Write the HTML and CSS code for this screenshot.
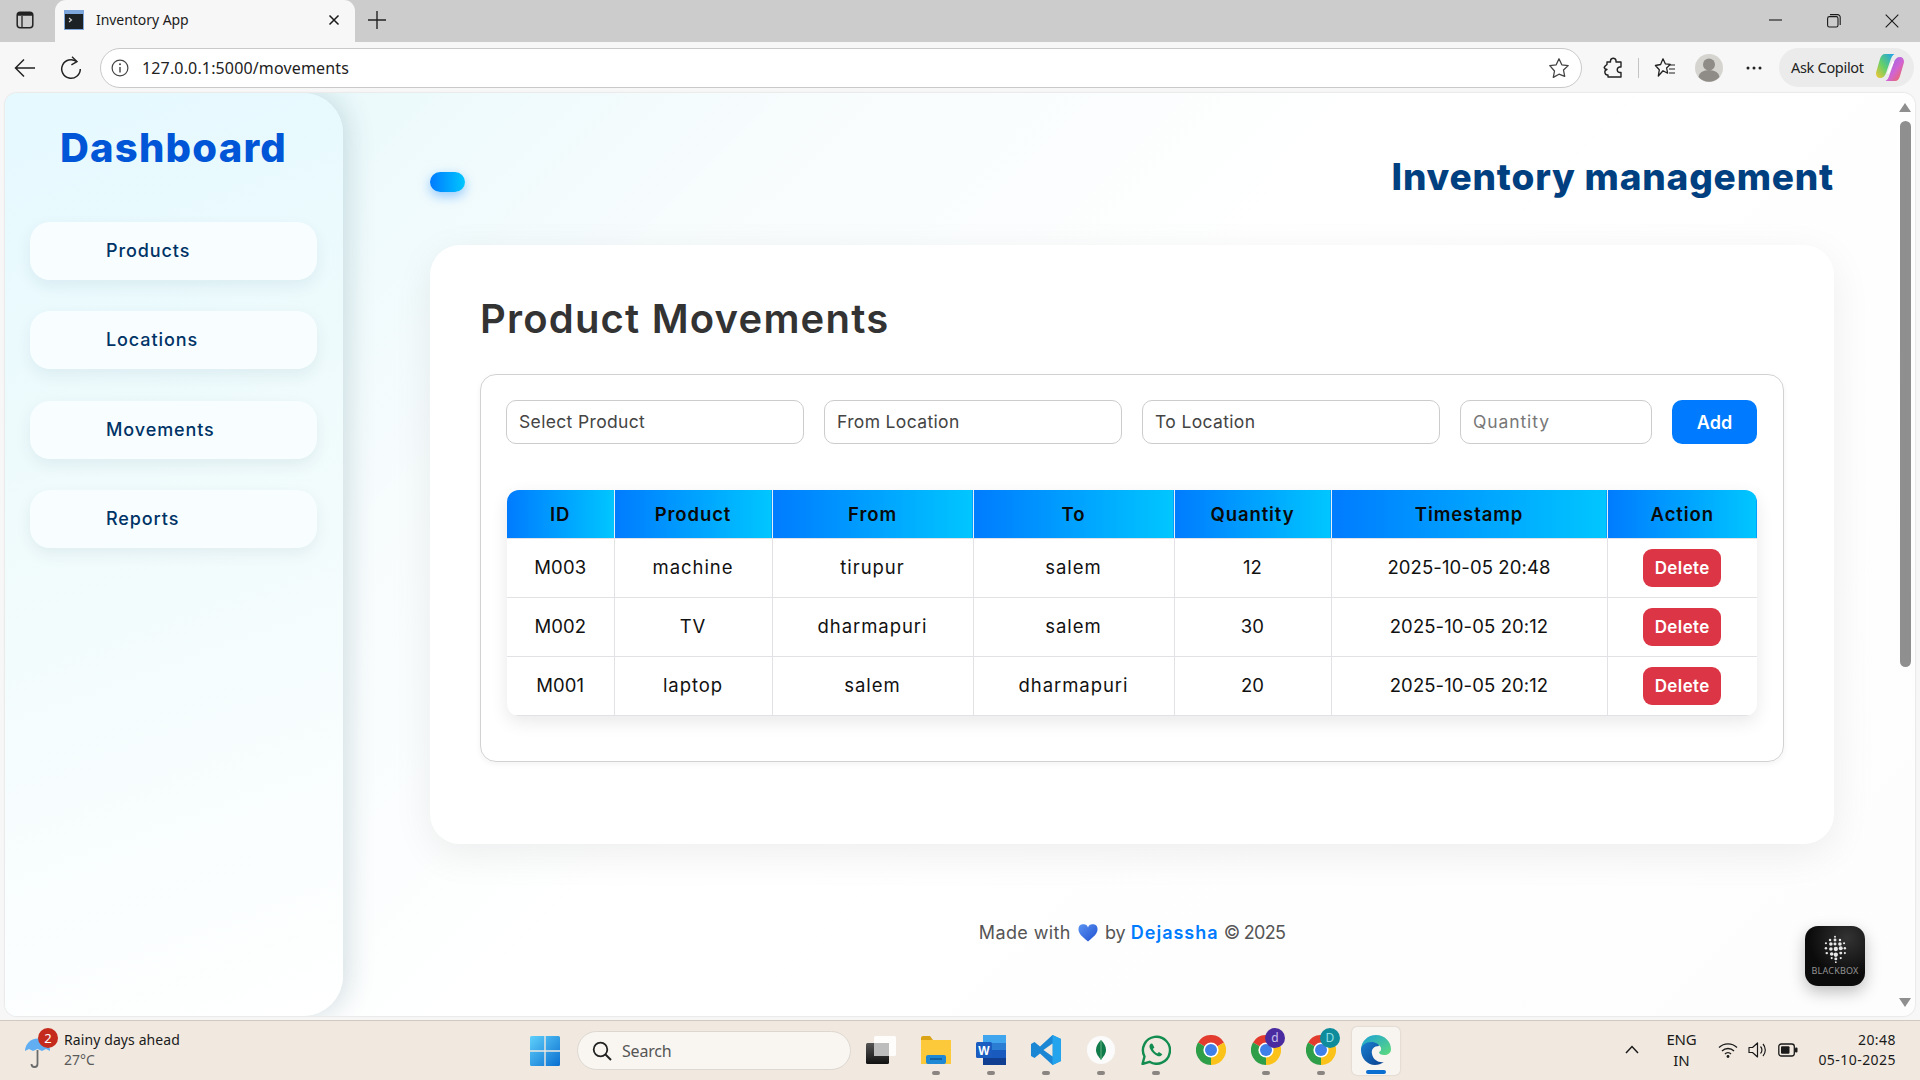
FILE: index.html
```html
<!DOCTYPE html>
<html lang="en">
<head>
<meta charset="utf-8">
<title>Inventory App</title>
<link rel="stylesheet" href="styles.css">
</head>
<body>
<svg class="defs" width="0" height="0" aria-hidden="true">
  <defs>
    <g id="chrome">
      <path d="M15 15 L2 7.5 A15 15 0 0 1 28 7.5 Z" fill="#e33b2e"/>
      <path d="M15 15 L28 7.5 A15 15 0 0 1 15 30 Z" fill="#fbc21a"/>
      <path d="M15 15 L15 30 A15 15 0 0 1 2 7.5 Z" fill="#2f9e48"/>
      <circle cx="15" cy="15" r="7.6" fill="#fff"/>
      <circle cx="15" cy="15" r="6" fill="#3f7fe8"/>
    </g>
  </defs>
</svg>

<header class="tabstrip">
  <svg class="sidebar-ic" width="18" height="18" viewBox="0 0 18 18"><rect x="1.2" y="1.2" width="15.6" height="15.6" rx="3" fill="none" stroke="#222" stroke-width="1.5"/><path d="M1.5 4.8V3.5A2.4 2.4 0 0 1 3.9 1.2h10.2a2.4 2.4 0 0 1 2.4 2.3v1.3z" fill="#222"/><path d="M6 5v11" stroke="#222" stroke-width="1.3"/></svg>
  <div class="tab">
    <svg width="20" height="20" viewBox="0 0 20 20"><rect width="20" height="20" fill="#7da6dc"/><rect x="1" y="4" width="18" height="15" fill="#1c2126"/><path d="M5 8l2.5 2L5 12" stroke="#ddd" fill="none" stroke-width="1.1"/></svg>
    <span class="tab-title">Inventory App</span>
    <svg width="12" height="12" viewBox="0 0 12 12"><path d="M1.5 1.5l9 9M10.5 1.5l-9 9" stroke="#1a1a1a" stroke-width="1.5"/></svg>
  </div>
  <svg class="plus" width="18" height="18" viewBox="0 0 18 18"><path d="M9 0v18M0 9h18" stroke="#222" stroke-width="1.4"/></svg>
  <div class="winctl">
    <svg width="14" height="14" viewBox="0 0 14 14"><path d="M0 6h13" stroke="#1a1a1a" stroke-width="1.1"/></svg>
    <svg width="14" height="14" viewBox="0 0 14 14"><rect x=".6" y="2.6" width="10.4" height="10.4" rx="1.8" fill="none" stroke="#1a1a1a" stroke-width="1.1"/><path d="M3 .6h7.5A2.6 2.6 0 0 1 13.2 3.2V11" fill="none" stroke="#1a1a1a" stroke-width="1.1"/></svg>
    <svg width="14" height="14" viewBox="0 0 14 14"><path d="M.7.7l12.6 12.6M13.300.7L.7 13.300" stroke="#1a1a1a" stroke-width="1.1"/></svg>
  </div>
</header>

<nav class="toolbar">
  <svg class="back" width="22" height="20" viewBox="0 0 22 20"><path d="M21 10H2M10 1.5L1.5 10l8.5 8.5" fill="none" stroke="#222" stroke-width="1.5"/></svg>
  <svg class="reload" width="22" height="24" viewBox="0 0 22 24"><path d="M16.5 5.5A9.3 9.3 0 1 0 20.3 13" fill="none" stroke="#222" stroke-width="1.5"/><path d="M12 .8l5 4.7-5.6 3.3" fill="none" stroke="#222" stroke-width="1.4"/></svg>
  <div class="address">
    <svg width="18" height="18" viewBox="0 0 18 18"><circle cx="9" cy="9" r="7.9" fill="none" stroke="#444" stroke-width="1.2"/><path d="M9 8v5.5" stroke="#444" stroke-width="1.4"/><circle cx="9" cy="5.3" r="1" fill="#444"/></svg>
    <span class="url">127.0.0.1:5000/movements</span>
    <svg width="22" height="22" viewBox="0 0 22 22"><path d="M11 1.800l2.800 6 6.400.8-4.700 4.400 1.200 6.400L11 17.200l-5.700 3.200 1.200-6.400L1.800 8.600l6.400-.8z" fill="none" stroke="#444" stroke-width="1.3" stroke-linejoin="round"/></svg>
  </div>
  <svg class="t-ext" width="20" height="22" viewBox="0 0 20 22"><path d="M7.500 3.500a2.800 2.800 0 0 1 5.500 0V5H18v5h-1.500a2.800 2.800 0 0 0 0 5.500H18V20H5v-2a2.800 2.800 0 0 1-1-5.500l-1.800-.5-1-1.500 1-1.500L4 7.500V5h3.500z" fill="none" stroke="#222" stroke-width="1.4" stroke-linejoin="round"/></svg>
  <span class="t-div"></span>
  <svg class="t-fav" width="22" height="22" viewBox="0 0 22 22"><path d="M9 1.800l2.300 5 5 .6L12.600 11l1 5.200L9 13.700 4.300 19l1-6.200L1.400 8.500l5.200-1z" fill="none" stroke="#222" stroke-width="1.3" stroke-linejoin="round"/><path d="M14.500 8h6.500M15 12h6M15 16h6" stroke="#222" stroke-width="1.2"/></svg>
  <svg class="t-avatar" width="28" height="28" viewBox="0 0 28 28"><circle cx="14" cy="14" r="14" fill="#d6d4cf"/><circle cx="14" cy="10.500" r="6" fill="#8f8c87"/><path d="M3.500 23a10.500 7 0 0 1 21 0 14 14 0 0 1-21 0z" fill="#8f8c87"/></svg>
  <svg class="t-dots" width="16" height="4" viewBox="0 0 16 4"><circle cx="2" cy="2" r="1.5" fill="#222"/><circle cx="8" cy="2" r="1.5" fill="#222"/><circle cx="14" cy="2" r="1.5" fill="#222"/></svg>
  <div class="copilot">
    <span>Ask Copilot</span>
    <svg width="28" height="27" viewBox="0 0 28 27">
      <defs>
        <linearGradient id="cpa" x1="0" y1="1" x2="1" y2="0"><stop offset="0" stop-color="#f7c62f"/><stop offset=".45" stop-color="#63cf6a"/><stop offset="1" stop-color="#1b9ff0"/></linearGradient>
        <linearGradient id="cpb" x1="0" y1="0" x2="1" y2="1"><stop offset="0" stop-color="#7f6cf0"/><stop offset=".55" stop-color="#d264d2"/><stop offset="1" stop-color="#f5693f"/></linearGradient>
      </defs>
      <path d="M9 0h9.500c-2 1-3 3-4 6L10 19c-1 3-3 5-6 5-3 0-4.500-3-3.800-6L4 5c.8-3 2.500-5 5-5z" fill="url(#cpa)"/>
      <path d="M19 27H9.500c2-1 3-3 4-6L18 8c1-3 3-5 6-5 3 0 4.500 3 3.800 6L24 22c-.8 3-2.500 5-5 5z" fill="url(#cpb)"/>
      <path d="M16.500 7.500l-5.500 12h1.800l5.400-12z" fill="#fff"/>
    </svg>
  </div>
</nav>

<div class="viewport">
  <div class="page">
    <aside class="sidebar">
      <h2 class="brand">Dashboard</h2>
      <ul class="menu">
        <li><a class="menu-item">Products</a></li>
        <li><a class="menu-item">Locations</a></li>
        <li><a class="menu-item">Movements</a></li>
        <li><a class="menu-item">Reports</a></li>
      </ul>
    </aside>

    <main class="main">
      <div class="topbar">
        <span class="toggle"></span>
        <h1 class="app-title">Inventory management</h1>
      </div>

      <section class="card">
        <h2 class="card-title">Product Movements</h2>
        <div class="panel">
          <form class="entry">
            <div class="field grow">Select Product</div>
            <div class="field grow">From Location</div>
            <div class="field grow">To Location</div>
            <div class="field qty">Quantity</div>
            <button class="add" type="button">Add</button>
          </form>
          <div class="table-wrap">
            <table class="grid">
              <colgroup>
                <col class="c-id"><col class="c-prod"><col class="c-from"><col class="c-to"><col class="c-qty"><col class="c-time"><col class="c-act">
              </colgroup>
              <thead>
                <tr><th>ID</th><th>Product</th><th>From</th><th>To</th><th>Quantity</th><th>Timestamp</th><th>Action</th></tr>
              </thead>
              <tbody>
                <tr><td class="n">M003</td><td>machine</td><td>tirupur</td><td>salem</td><td class="n">12</td><td class="n">2025-10-05 20:48</td><td class="act"><button class="del" type="button">Delete</button></td></tr>
                <tr><td class="n">M002</td><td>TV</td><td>dharmapuri</td><td>salem</td><td class="n">30</td><td class="n">2025-10-05 20:12</td><td class="act"><button class="del" type="button">Delete</button></td></tr>
                <tr><td class="n">M001</td><td>laptop</td><td>salem</td><td>dharmapuri</td><td class="n">20</td><td class="n">2025-10-05 20:12</td><td class="act"><button class="del" type="button">Delete</button></td></tr>
              </tbody>
            </table>
          </div>
        </div>
      </section>

      <footer class="foot">
        <span class="made">Made with</span>
        <svg width="20" height="18" viewBox="0 0 20 18"><defs><linearGradient id="hg" x1="0" y1="0" x2="1" y2="1"><stop offset="0" stop-color="#5b93f2"/><stop offset="1" stop-color="#1f50d0"/></linearGradient></defs><path d="M10 17.500C4 12.500.5 9.500.5 5.500A4.900 4.900 0 0 1 10 3.500a4.900 4.900 0 0 1 9.500 2c0 4-3.500 7-9.500 12z" fill="url(#hg)"/></svg>
        <span>by <b class="author">Dejassha</b> <span class="copy">© 2025</span></span>
      </footer>

      <div class="blackbox">
        <svg width="28" height="28" viewBox="0 0 34 34" fill="#e8e8e8">
          <circle cx="17" cy="2" r="1.2"/>
          <circle cx="11" cy="6" r="1.5"/><circle cx="17" cy="6" r="1.800"/><circle cx="23" cy="6" r="1.500"/>
          <circle cx="6" cy="10" r="1.300"/><circle cx="12" cy="11" r="2.200"/><circle cx="17" cy="11" r="1.800"/><circle cx="23" cy="11" r="2.200"/><circle cx="28" cy="10" r="1.300"/>
          <circle cx="6" cy="16" r="1.500"/><circle cx="12" cy="17" r="2.200"/><circle cx="18" cy="17" r="2.600"/><circle cx="24" cy="16" r="2.400"/><circle cx="29" cy="16" r="1.500"/>
          <circle cx="7" cy="22" r="1.500"/><circle cx="13" cy="23" r="2.200"/><circle cx="18" cy="24" r="2.600"/><circle cx="24" cy="22" r="1.800"/><circle cx="29" cy="22" r="1.300"/>
          <circle cx="13" cy="28" r="1.300"/><circle cx="18" cy="29" r="1.800"/><circle cx="24" cy="28" r="1.300"/><circle cx="18" cy="33" r="1.100"/>
        </svg>
        <span class="bb-label">BLACKBOX</span>
      </div>
    </main>

    <div class="scrollbar">
      <span class="arrow up"></span>
      <span class="thumb"></span>
      <span class="arrow down"></span>
    </div>
  </div>
</div>

<footer class="taskbar">
  <div class="weather">
    <div class="w-icon">
      <svg width="28" height="32" viewBox="0 0 28 32"><path d="M1 13a12 12 0 0 1 25 0l-4-2-4 2-4.500-2L9 13l-4-2z" fill="#62aef2"/><path d="M13.500 12v14a3 3 0 0 1-6 0" fill="none" stroke="#6b6b6b" stroke-width="1.800"/></svg>
      <span class="w-badge">2</span>
    </div>
    <div class="w-text"><span class="w-main">Rainy days ahead</span><span class="w-sub">27°C</span></div>
  </div>

  <div class="apps">
    <svg width="30" height="30" viewBox="0 0 30 30"><defs><linearGradient id="wl" x1="0" y1="0" x2="1" y2="1"><stop offset="0" stop-color="#5fd0fb"/><stop offset="1" stop-color="#0a6fd0"/></linearGradient></defs><path d="M0 1.500A1.500 1.500 0 0 1 1.500 0h12.800v14.300H0zM15.700 0h12.800A1.500 1.500 0 0 1 30 1.500v12.800H15.700zM0 15.700h14.300V30H1.500A1.500 1.500 0 0 1 0 28.500zM15.700 15.700H30v12.800a1.500 1.500 0 0 1-1.500 1.500H15.700z" fill="url(#wl)"/></svg>
    <div class="search">
      <svg width="20" height="20" viewBox="0 0 20 20"><circle cx="8.500" cy="8.500" r="6.800" fill="none" stroke="#222" stroke-width="1.800"/><path d="M13.500 13.500l5.500 5.500" stroke="#222" stroke-width="2"/></svg>
      <span>Search</span>
    </div>
    <div class="dock">
      <div class="app">
        <svg width="30" height="30" viewBox="0 0 30 30"><defs><linearGradient id="tv" x1="0" y1="0" x2="0" y2="1"><stop offset="0" stop-color="#555"/><stop offset="1" stop-color="#111"/></linearGradient></defs><rect x="0" y="8" width="23" height="21" rx="1.500" fill="url(#tv)"/><rect x="8" y="1" width="22" height="20" rx="1.500" fill="#fff" fill-opacity=".88"/><rect x="8" y="8" width="15" height="13" fill="#bdbdbd"/></svg>
      </div>
      <div class="app on">
        <svg width="30" height="28" viewBox="0 0 30 28"><path d="M0 2a2 2 0 0 1 2-2h7l3 4H0z" fill="#dba316"/><rect x="0" y="4" width="30" height="24" fill="#fcc93a"/><rect x="5" y="19" width="20" height="9" rx="2" fill="#1e88d4"/><path d="M9 23h12" stroke="#0b4f8a" stroke-width="1.300"/></svg>
        <i class="pip"></i>
      </div>
      <div class="app on">
        <svg width="30" height="30" viewBox="0 0 30 30"><rect x="7" y="0" width="23" height="30" rx="1.500" fill="#2b7cd3"/><rect x="7" y="0" width="23" height="8" fill="#41a5ee"/><rect x="7" y="15" width="23" height="8" fill="#185abd"/><rect x="7" y="23" width="23" height="7" fill="#103f91"/><rect x="0" y="7" width="16" height="16" rx="1.500" fill="#1a5cc0"/><text class="word-w" x="8" y="19.500" text-anchor="middle">W</text></svg>
        <i class="pip"></i>
      </div>
      <div class="app on">
        <svg width="30" height="30" viewBox="0 0 30 30"><path d="M21.500 0L30 4v22l-8.500 4L9 18.500 3.500 23 0 21v-12l3.500-2L9 11.500z" fill="#1b86d4"/><path d="M21.500 0L30 4v22l-8.500 4z" fill="#25a4ee"/><path d="M21.500 8.500L12.500 15l9 6.500z" fill="#f1e9e0"/></svg>
        <i class="pip"></i>
      </div>
      <div class="app on">
        <svg width="30" height="30" viewBox="0 0 30 30"><circle cx="15" cy="15" r="14" fill="#fbfbfb"/><path d="M15 5c3 3 5 6 5 10s-3 7-5 10c-2-3-5-6-5-10s2-7 5-10z" fill="#0f7a4a"/><path d="M15 5v20" stroke="#7cc08f" stroke-width=".8"/></svg>
        <i class="pip"></i>
      </div>
      <div class="app on">
        <svg width="30" height="30" viewBox="0 0 30 30"><path d="M1.500 29l2-7.500A13.500 13.500 0 1 1 8.500 26.800z" fill="none" stroke="#128c4f" stroke-width="2.400" stroke-linejoin="round"/><path d="M10 8.500c-1.500 1-2 2.800-1 5 1.500 3.500 4.500 6.300 7.500 7.500 2.200.8 4-.2 4.800-1.800l-3.400-2.200-1.500 1.500c-2-1-3.500-2.500-4.500-4.500l1.500-1.500-2-3.700z" fill="#128c4f"/></svg>
        <i class="pip"></i>
      </div>
      <div class="app">
        <svg width="30" height="30" viewBox="0 0 30 30"><use href="#chrome"/></svg>
      </div>
      <div class="app on">
        <svg width="30" height="30" viewBox="0 0 30 30"><use href="#chrome"/></svg>
        <span class="pbadge violet">d</span>
        <i class="pip"></i>
      </div>
      <div class="app on">
        <svg width="30" height="30" viewBox="0 0 30 30"><use href="#chrome"/></svg>
        <span class="pbadge teal">D</span>
        <i class="pip"></i>
      </div>
      <div class="app active">
        <svg width="30" height="30" viewBox="0 0 30 30"><defs><linearGradient id="eg" x1="0" y1="0" x2="1" y2="1"><stop offset="0" stop-color="#1aa0d8"/><stop offset="1" stop-color="#5fdc7a"/></linearGradient><linearGradient id="eb" x1="0" y1="0" x2="1" y2="1"><stop offset="0" stop-color="#1a7fd0"/><stop offset="1" stop-color="#0b3f8e"/></linearGradient></defs><path d="M0 15C0 6 7 0 15 0c9 0 15 7 15 14 0 4-3 6-7 6-3 0-5-1-5-3 3-1 3-6-1-7-7-1-11 3-12 9z" fill="url(#eg)"/><path d="M0 15c0-5 5-8 10-8 4 0 8 2 8 4-5 0-8 3-7 8 1 6 7 9 12 8-3 2-6 3-9 3-8 0-14-7-14-15z" fill="url(#eb)"/></svg>
        <i class="bar"></i>
      </div>
    </div>
  </div>

  <div class="tray">
    <svg class="chev" width="14" height="9" viewBox="0 0 14 9"><path d="M1 8l6-6.500L13 8" fill="none" stroke="#1a1a1a" stroke-width="1.500"/></svg>
    <div class="lang"><span>ENG</span><span>IN</span></div>
    <svg width="20" height="18" viewBox="0 0 20 18"><path d="M1 6.500a13 13 0 0 1 18 0M4 10a8.500 8.500 0 0 1 12 0M7 13a4 4 0 0 1 6 0" fill="none" stroke="#1a1a1a" stroke-width="1.300"/><circle cx="10" cy="15.500" r="1.400" fill="#1a1a1a"/></svg>
    <svg width="20" height="18" viewBox="0 0 20 18"><path d="M1 6.500h3.500L9.500 2v14L4.500 11.500H1z" fill="none" stroke="#1a1a1a" stroke-width="1.200" stroke-linejoin="round"/><path d="M12.500 5.500a5 5 0 0 1 0 7M15 3a9 9 0 0 1 0 12" fill="none" stroke="#1a1a1a" stroke-width="1.200"/></svg>
    <svg width="20" height="14" viewBox="0 0 20 14"><rect x=".8" y="1" width="15.500" height="12" rx="2.500" fill="none" stroke="#1a1a1a" stroke-width="1.300"/><rect x="3" y="3.200" width="8.500" height="7.600" rx="1" fill="#1a1a1a"/><rect x="17" y="4.500" width="2.500" height="5" rx="1" fill="#1a1a1a"/></svg>
    <div class="clock"><span>20:48</span><span>05-10-2025</span></div>
  </div>
</footer>
</body>
</html>
```

FILE: styles.css
```css
* { box-sizing: border-box; }
html, body { margin: 0; padding: 0; }
body {
  width: 1920px;
  height: 1080px;
  overflow: hidden;
  display: flex;
  flex-direction: column;
  background: #f7f7f7;
  font-family: "Noto Sans", "Open Sans", sans-serif;
}
svg { display: block; flex: none; }
.defs { position: absolute; }

/* tab strip */
.tabstrip {
  height: 42px;
  flex: none;
  background: #cccccc;
  display: flex;
  align-items: center;
  padding-left: 16px;
}
.sidebar-ic { margin: 0 21px 2px 0; }
.tab {
  width: 300px;
  height: 42px;
  flex: none;
  background: #f7f7f7;
  border-radius: 11px 11px 0 0;
  display: flex;
  align-items: center;
  padding: 0 15px 3px 9px;
}
.tab-title {
  margin-left: 12px;
  flex: 1;
  font-size: 14px;
  letter-spacing: -0.05px;
  color: #1c1c1c;
}
.plus { margin: 0 0 2px 13px; }
.winctl {
  margin-left: auto;
  display: flex;
  gap: 44px;
  padding-right: 21px;
}

/* toolbar */
.toolbar {
  height: 50px;
  flex: none;
  background: #f7f7f7;
  display: flex;
  align-items: center;
  padding: 1px 6px 0 14px;
}
.back { margin-right: 24px; }
.reload { margin-right: 18px; }
.address {
  width: 1482px;
  height: 40px;
  flex: none;
  background: #fff;
  border: 1px solid #c9c9c9;
  border-radius: 20px;
  display: flex;
  align-items: center;
  padding: 0 11px 0 10px;
}
.url {
  margin-left: 13px;
  flex: 1;
  font-size: 16px;
  letter-spacing: 0.15px;
  color: #222;
}
.t-ext { margin-left: 21px; }
.t-div { width: 1px; height: 20px; flex: none; background: #c4c4c4; margin-left: 15px; }
.t-fav { margin-left: 15px; }
.t-avatar { margin-left: 19px; }
.t-dots { margin-left: 23px; }
.copilot {
  margin: 0 0 1px 17px;
  width: 135px;
  height: 39px;
  flex: none;
  border-radius: 20px;
  background: #ebebeb;
  display: flex;
  align-items: center;
  justify-content: space-between;
  padding: 0 10px 0 12px;
  font-size: 14.5px;
  letter-spacing: -0.3px;
  color: #222;
}

/* page viewport */
.viewport {
  flex: 1;
  min-height: 0;
  padding: 1px 5px 4px 5px;
  background: #f7f7f7;
}
.page {
  height: 100%;
  display: flex;
  border-radius: 12px;
  overflow: hidden;
  background: linear-gradient(135deg, #e2f8fb 0%, #f7fcfd 28%, #ffffff 50%, #fefdfd 100%);
  box-shadow: 0 0 2px rgba(0, 0, 0, 0.18);
  font-family: Inter, "Noto Sans", sans-serif;
}

/* sidebar */
.sidebar {
  width: 338px;
  flex: none;
  border-radius: 0 40px 40px 0;
  background: linear-gradient(160deg, #e5f9ff 0%, #effbfc 40%, #ffffff 100%);
  box-shadow: 5px 0 28px rgba(0, 60, 80, 0.16);
  padding: 25px 26px 0 25px;
  position: relative;
  z-index: 1;
}
.brand {
  margin: 0;
  height: 60px;
  line-height: 60px;
  text-align: center;
  font-size: 40px;
  font-weight: 800;
  letter-spacing: 1.2px;
  color: #0056d6;
}
.menu {
  list-style: none;
  margin: 44px 0 0;
  padding: 0;
  display: flex;
  flex-direction: column;
  gap: 31.4px;
}
.menu-item {
  display: block;
  height: 58px;
  line-height: 58px;
  padding-left: 76px;
  border-radius: 20px;
  background: #f8feff;
  box-shadow: 0 6px 16px rgba(0, 60, 90, 0.07);
  font-size: 18px;
  font-weight: 500;
  letter-spacing: 0.9px;
  color: #003366;
}

/* main */
.main {
  flex: 1;
  min-width: 0;
  padding: 0 61px 0 87px;
  position: relative;
}
.topbar {
  height: 152px;
  display: flex;
  align-items: center;
  justify-content: space-between;
  padding-top: 25px;
}
.toggle {
  width: 35px;
  height: 20px;
  border-radius: 10px;
  background: linear-gradient(90deg, #007bff, #00c6ff);
  box-shadow: 0 4px 12px rgba(0, 123, 255, 0.4);
}
.app-title {
  margin: 0 0 11px;
  font-size: 37px;
  font-weight: 800;
  letter-spacing: 0.8px;
  color: #003f80;
}
.card {
  height: 599px;
  background: #fff;
  border-radius: 30px;
  box-shadow: 0 10px 40px rgba(0, 0, 0, 0.07);
  padding: 47px 50px 0;
}
.card-title {
  margin: 0;
  height: 54px;
  line-height: 54px;
  font-size: 40px;
  font-weight: 600;
  letter-spacing: 1.2px;
  color: #333;
}
.panel {
  margin-top: 28px;
  height: 388px;
  border: 1px solid #d2d2d2;
  border-radius: 16px;
  padding: 25px 26px 0 25px;
  box-shadow: 0 2px 6px rgba(0, 0, 0, 0.05);
}
.entry {
  display: flex;
  gap: 20px;
}
.field {
  height: 44px;
  line-height: 42px;
  border: 1px solid #cccccc;
  border-radius: 10px;
  padding: 0 12px;
  font-size: 17.5px;
  letter-spacing: 0.35px;
  color: #444;
  background: #fff;
}
.grow { flex: 1; }
.qty { width: 192px; flex: none; color: #777; letter-spacing: 0.9px; }
.add {
  width: 85px;
  height: 44px;
  flex: none;
  border: 0;
  border-radius: 10px;
  background: #007bff;
  color: #fff;
  font: 600 18px Inter, sans-serif;
}
.table-wrap {
  margin: 46px 0 0 1px;
  width: 1250px;
  border-radius: 12px;
  overflow: hidden;
  box-shadow: 0 6px 18px rgba(0, 0, 0, 0.09);
}
.grid {
  width: 100%;
  table-layout: fixed;
  border-collapse: collapse;
  text-align: center;
  font-size: 18.5px;
  letter-spacing: 0.95px;
  color: #111;
}
.c-id { width: 107px; }
.c-prod { width: 158px; }
.c-from { width: 201px; }
.c-to { width: 201px; }
.c-qty { width: 157px; }
.c-time { width: 276px; }
.c-act { width: 150px; }
.grid th {
  height: 48px;
  padding: 0;
  background: linear-gradient(90deg, #007bff, #00c6ff);
  border-left: 1px solid #e4eef5;
  border-bottom: 1px solid #e2e2e6;
  font-weight: 600;
  letter-spacing: 0.9px;
  color: #0a0a0a;
}
.grid td {
  height: 59px;
  padding: 0 0 2px;
  border-left: 1px solid #e2e2e6;
  border-bottom: 1px solid #e2e2e6;
}
.grid td.n { letter-spacing: 0.1px; }
.grid td.act { padding: 0; }
.grid th:first-child, .grid td:first-child { border-left: 0; }
.del {
  width: 78px;
  height: 38px;
  border: 0;
  border-radius: 9px;
  background: #dc3545;
  color: #fff;
  font: 600 17px Inter, sans-serif;
  letter-spacing: 0.4px;
  vertical-align: middle;
}
.foot {
  margin-top: 76px;
  height: 25px;
  display: flex;
  align-items: center;
  justify-content: center;
  gap: 7px;
  font-size: 18px;
  color: #555;
}
.made { letter-spacing: 0.4px; }
.author { font-weight: 600; letter-spacing: 1px; color: #007bff; }
.copy { letter-spacing: -0.7px; }
.blackbox {
  position: absolute;
  left: 1462px;
  top: 833px;
  width: 60px;
  height: 60px;
  border-radius: 13px;
  background: radial-gradient(circle at 70% 20%, #333 0%, #0b0b0b 60%);
  box-shadow: 0 6px 16px rgba(0, 0, 0, 0.25);
  display: flex;
  flex-direction: column;
  align-items: center;
  padding-top: 9px;
}
.bb-label {
  margin-top: 2px;
  font: 400 9px/12px "Noto Sans", sans-serif;
  letter-spacing: 0.2px;
  color: #939393;
}

/* scrollbar */
.scrollbar {
  width: 20px;
  flex: none;
  display: flex;
  flex-direction: column;
  align-items: center;
  padding-top: 10px;
}
.thumb {
  width: 11px;
  height: 546px;
  margin-top: 9px;
  border-radius: 6px;
  background: #8f8f8f;
}
.arrow {
  width: 0;
  height: 0;
  border-left: 6px solid transparent;
  border-right: 6px solid transparent;
}
.arrow.up { border-bottom: 9px solid #8f8f8f; }
.arrow.down { margin-top: auto; margin-bottom: 9px; border-top: 9px solid #8f8f8f; }

/* taskbar */
.taskbar {
  height: 60px;
  flex: none;
  background: #f1e9e0;
  border-top: 1px solid #cfc9c2;
  display: flex;
  align-items: center;
  padding-left: 24px;
  font-family: "Noto Sans", sans-serif;
  color: #1a1a1a;
}
.weather { width: 506px; display: flex; align-items: center; gap: 10px; flex: none; padding-bottom: 2px; }
.w-icon { position: relative; width: 30px; height: 36px; padding-top: 6px; }
.w-badge {
  position: absolute;
  top: -4px;
  left: 14px;
  width: 20px;
  height: 20px;
  border-radius: 50%;
  background: #c42b1c;
  color: #fff;
  font-size: 13px;
  line-height: 20px;
  text-align: center;
}
.w-text { display: flex; flex-direction: column; }
.w-main { font-size: 14px; line-height: 20px; letter-spacing: 0.1px; }
.w-sub { font-size: 14px; line-height: 19px; color: #5a5a5a; }
.apps { display: flex; align-items: center; flex: none; }
.search {
  margin-left: 17px;
  width: 274px;
  height: 39px;
  border-radius: 20px;
  background: #f9f6f1;
  border: 1px solid #dcd7d0;
  display: flex;
  align-items: center;
  gap: 10px;
  padding-left: 14px;
  font-size: 16px;
  color: #555;
  letter-spacing: -0.2px;
}
.dock { display: flex; margin-left: 2px; }
.app {
  position: relative;
  width: 55px;
  height: 48px;
  display: flex;
  align-items: center;
  justify-content: center;
  padding-bottom: 1px;
}
.pip {
  position: absolute;
  left: 50%;
  bottom: 0;
  width: 8px;
  height: 4px;
  margin-left: -4px;
  border-radius: 2px;
  background: #8a8580;
}
.app.active {
  width: 48px;
  margin-left: 4px;
  background: #f8f4ef;
  border-radius: 5px;
  box-shadow: 0 0 2px rgba(0, 0, 0, 0.18);
}
.bar {
  position: absolute;
  left: 50%;
  bottom: 1px;
  width: 20px;
  height: 4px;
  margin-left: -10px;
  border-radius: 2px;
  background: #0a6fd0;
}
.word-w { font: 700 12px "Liberation Sans", sans-serif; fill: #fff; }
.pbadge {
  position: absolute;
  top: 1px;
  left: 27px;
  width: 20px;
  height: 20px;
  border-radius: 50%;
  font-size: 12px;
  line-height: 19px;
  text-align: center;
  color: #c7c0ea;
}
.violet { background: #4a2ca0; }
.teal { background: #0f8c9c; color: #8fdde6; }
.tray { margin-left: auto; display: flex; align-items: center; padding: 0 24px 2px 0; }
.chev { margin-right: 27px; }
.lang {
  display: flex;
  flex-direction: column;
  align-items: center;
  width: 30px;
  margin-right: 22px;
  font-size: 15px;
  line-height: 21px;
  letter-spacing: -0.2px;
}
.tray > svg + svg { margin-left: 10px; }
.clock {
  margin-left: 20px;
  display: flex;
  flex-direction: column;
  align-items: flex-end;
  font-size: 14px;
  line-height: 20px;
  letter-spacing: 0.45px;
}
```
